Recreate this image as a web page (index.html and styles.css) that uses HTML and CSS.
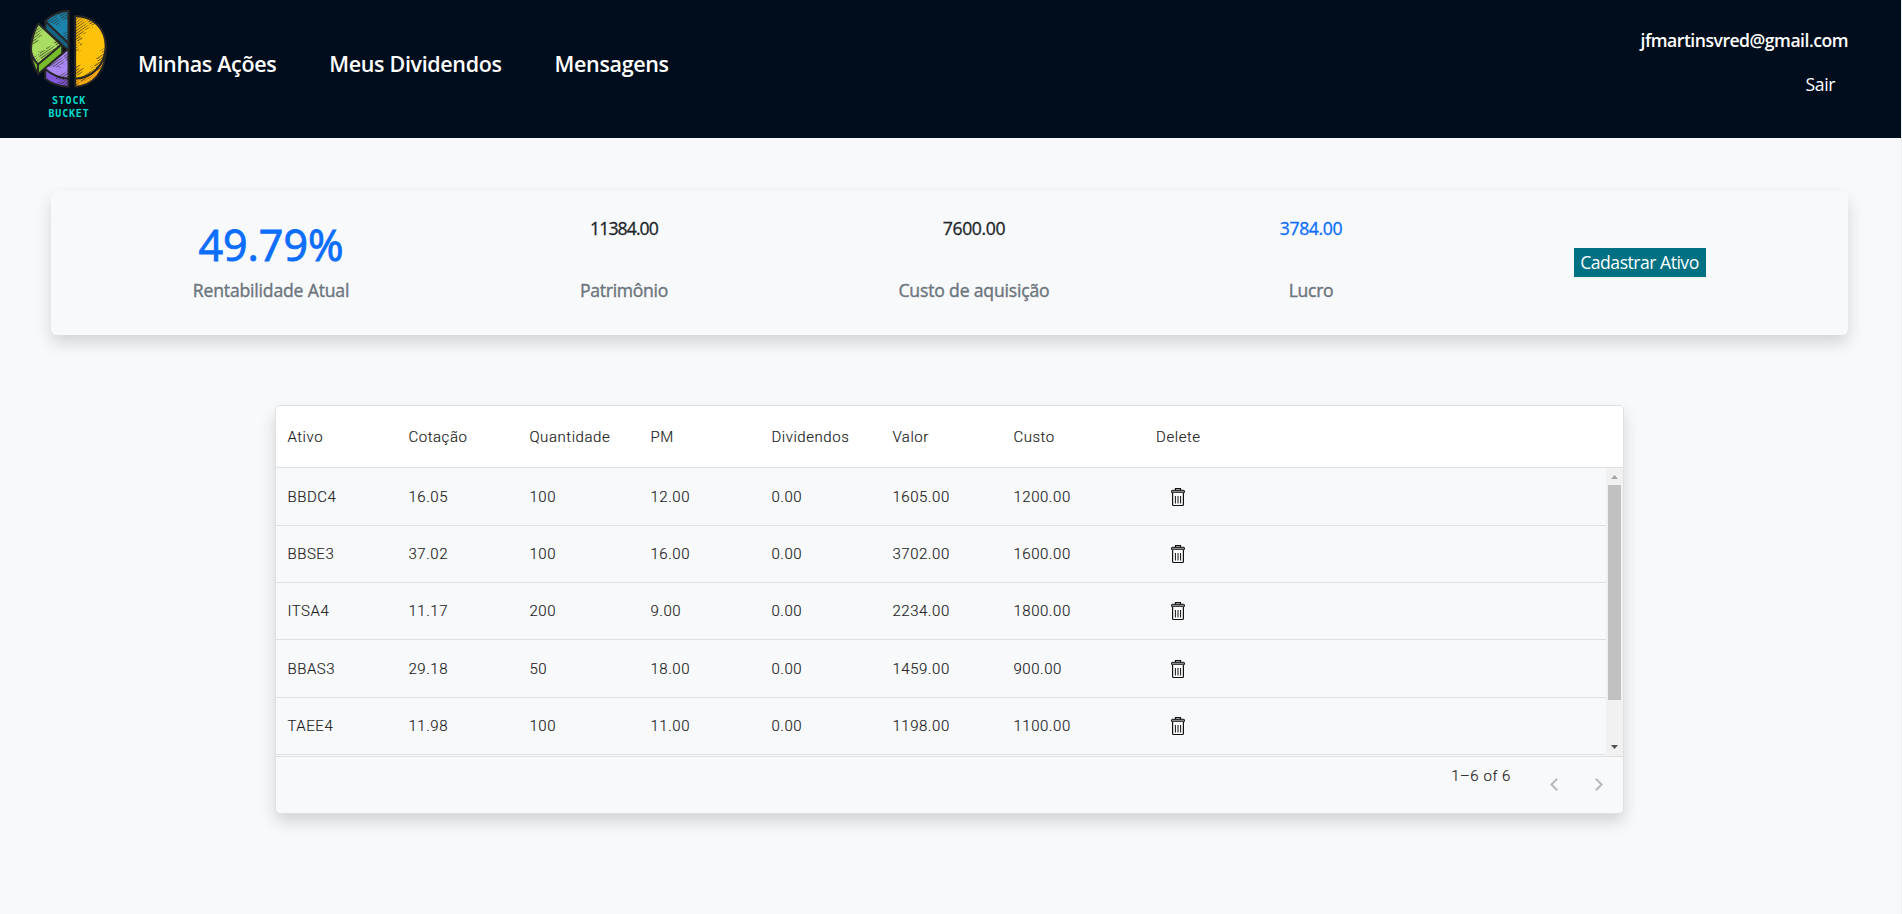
FILE: index.html
```html
<!DOCTYPE html>
<html lang="pt-BR">
<head>
<meta charset="utf-8">
<title>Stock Bucket</title>
<link rel="stylesheet" href="styles.css">
</head>
<body>
<svg class="defs" aria-hidden="true">
  <defs>
    <pattern id="hatch" width="60" height="7" patternUnits="userSpaceOnUse" patternTransform="rotate(-35)">
      <path d="M0 1.5L48 2.6L60 3L48 4L0 4.5Z" fill="#242019"/>
    </pattern>
    <symbol id="trash" viewBox="0 0 14 18">
      <path d="M4.5 2V.7h5V2" fill="none" stroke="#111" stroke-width="1.2"/>
      <rect x=".6" y="2.3" width="12.8" height="2.6" rx=".6" fill="#8b8b8b" stroke="#111"/>
      <path d="M1.6 5v11.4q0 1.1 1.1 1.1h8.6q1.1 0 1.1-1.1V5" fill="#fff" stroke="#111" stroke-width="1.2"/>
      <path d="M4.4 8v7.5M7 8v7.5M9.6 8v7.5" stroke="#111"/>
    </symbol>
  </defs>
</svg>
<header class="topbar">
  <div class="brand">
    <svg class="pie" viewBox="88 26 236 238">
      <g stroke="#272626" stroke-width="6" stroke-linejoin="round">
        <path d="M226 47C286 50 318 92 318 148C318 215 280 257 226 260Z" fill="#f5a80f"/>
        <path d="M226 47C284 48 318 88 318 138C316 195 278 234 226 236Z" fill="#ffc20a"/>
        <path d="M206 31V150L136 95V62Q165 34 206 31Z" fill="#146382"/>
        <path d="M206 31V130L136 62Q165 34 206 31Z" fill="#1c85ae"/>
        <path d="M206 146V260Q163 258 136 236V202Z" fill="#8258dc"/>
        <path d="M206 146V236Q165 233 136 207V202Z" fill="#a987f3"/>
        <path d="M115 70L187 134V160L115 222Q92 187 93 145Q96 102 115 70Z" fill="#77bd2b"/>
        <path d="M115 70L184 134L114 193Q92 170 93 145Q96 102 115 70Z" fill="#a9de62"/>
        <path d="M114 193V222" fill="none"/>
      </g>
      <g class="hatching" fill="url(#hatch)">
        <path d="M226 47L256 52L290 72L272 76L280 82L248 92L262 98L238 106L252 116L234 124L250 132L232 142L244 150L226 158Z"/>
        <path d="M318 140L316 174L300 208L272 232L226 258V240L262 232L250 224L280 210L270 200L296 184L288 174L308 160L302 150Z"/>
        <path d="M226 196L244 194L236 206L256 204L242 222L226 230Z"/>
        <path d="M206 34V60L186 58L196 68L176 66L184 76L164 74L140 62L170 42Z"/>
        <path d="M206 92V128L186 110L196 104L184 98Z"/>
        <path d="M206 158V182L190 184L198 192L176 194L186 204L160 200L140 200Z"/>
        <path d="M206 212V256L170 250L190 240L166 236L186 222Z"/>
        <path d="M115 74L134 90L118 100L128 106L108 116L120 124L98 132L96 120Z"/>
        <path d="M184 134L114 192L98 168L122 160L114 154L142 148L134 142L164 134L154 126L168 122Z"/>
      </g>
    </svg>
    <div class="brand-name">STOCK<br>BUCKET</div>
  </div>
  <nav class="nav">
    <a>Minhas Ações</a>
    <a>Meus Dividendos</a>
    <a>Mensagens</a>
  </nav>
  <div class="user">
    <span class="email">jfmartinsvred@gmail.com</span>
    <a class="logout">Sair</a>
  </div>
</header>
<main class="page">
  <section class="summary">
    <div class="stat"><span class="big">49.79%</span><span class="label wide">Rentabilidade Atual</span></div>
    <div class="stat"><span class="value tight">11384.00</span><span class="label">Patrimônio</span></div>
    <div class="stat"><span class="value">7600.00</span><span class="label wide">Custo de aquisição</span></div>
    <div class="stat"><span class="value blue">3784.00</span><span class="label">Lucro</span></div>
    <a class="add">Cadastrar Ativo</a>
  </section>
  <section class="grid">
    <div class="row head"><span>Ativo</span><span>Cotação</span><span>Quantidade</span><span>PM</span><span>Dividendos</span><span>Valor</span><span>Custo</span><span class="del">Delete</span></div>
    <div class="body">
      <div class="rows">
        <div class="row tall"><span>BBDC4</span><span>16.05</span><span>100</span><span>12.00</span><span>0.00</span><span>1605.00</span><span>1200.00</span><span class="del"><svg><use href="#trash"/></svg></span></div>
        <div class="row"><span>BBSE3</span><span>37.02</span><span>100</span><span>16.00</span><span>0.00</span><span>3702.00</span><span>1600.00</span><span class="del"><svg><use href="#trash"/></svg></span></div>
        <div class="row"><span>ITSA4</span><span>11.17</span><span>200</span><span>9.00</span><span>0.00</span><span>2234.00</span><span>1800.00</span><span class="del"><svg><use href="#trash"/></svg></span></div>
        <div class="row tall"><span>BBAS3</span><span>29.18</span><span>50</span><span>18.00</span><span>0.00</span><span>1459.00</span><span>900.00</span><span class="del"><svg><use href="#trash"/></svg></span></div>
        <div class="row"><span>TAEE4</span><span>11.98</span><span>100</span><span>11.00</span><span>0.00</span><span>1198.00</span><span>1100.00</span><span class="del"><svg><use href="#trash"/></svg></span></div>
      </div>
      <div class="scroll">
        <svg class="arrow" viewBox="0 0 7 4"><path d="M0 4L3.5 0L7 4Z" fill="#a3a3a3"/></svg>
        <div class="thumb"></div>
        <svg class="arrow" viewBox="0 0 7 4"><path d="M0 0L3.5 4L7 0Z" fill="#505050"/></svg>
      </div>
    </div>
    <div class="foot">
      <span class="count">1–6 of 6</span>
      <svg class="chev" viewBox="0 0 8 13"><path d="M7.2 .8L1.4 6.5L7.2 12.2" /></svg>
      <svg class="chev" viewBox="0 0 8 13"><path d="M.8 .8L6.6 6.5L.8 12.2" /></svg>
    </div>
  </section>
</main>
</body>
</html>
```

FILE: styles.css
```css
* { box-sizing: border-box; }
body {
  margin: 0;
  height: 914px;
  overflow: hidden;
  background: #f8f9fb;
  border-right: 1px solid #eef0f2;
  font-family: "Open Sans", "Noto Sans", sans-serif;
  color: #212529;
}
.defs { position: absolute; width: 0; height: 0; }
.topbar {
  display: flex;
  height: 138px;
  background: #000d1c;
  color: #fff;
}
.brand { width: 138px; padding-top: 9px; text-align: center; }
.pie { display: block; width: 79px; height: 79px; margin-left: 29px; }
.hatching { opacity: .75; }
.brand-name {
  margin-top: 6px;
  font: bold 10px/13px "DejaVu Sans Mono", monospace;
  letter-spacing: .8px;
  color: #06dccb;
}
.nav { display: flex; padding-top: 48px; gap: 53px; font-size: 21.5px; line-height: 32px; font-weight: 600; letter-spacing: -.35px; }
.user {
  margin-left: auto;
  padding: 28px 53px 0 0;
  display: flex;
  flex-direction: column;
  align-items: flex-end;
  gap: 20px;
  font-size: 17.6px;
  line-height: 24px;
}
.email { font-weight: 600; letter-spacing: -.5px; }
.logout { margin-right: 13px; letter-spacing: -.4px; }
.page { padding: 53px 0 0 51px; }
.summary {
  display: grid;
  grid-template-columns: 440px 266px 434px 240px 417px;
  width: 1797px;
  height: 144px;
  border-radius: 6px;
  background: #f8f9fb;
  box-shadow: 0 8px 16px rgba(0,0,0,.15);
}
.stat { display: flex; flex-direction: column; align-items: center; justify-content: space-between; padding: 25px 0 33px; font-size: 17.6px; line-height: 24px; -webkit-text-stroke: .3px currentColor; }
.big { font-size: 43px; line-height: 58px; color: #0d6efd; -webkit-text-stroke-width: .9px; }
.value { letter-spacing: -.35px; }
.tight { letter-spacing: -.9px; }
.label { color: #6c757d; letter-spacing: -.3px; -webkit-text-stroke-width: .4px; }
.wide { letter-spacing: -.18px; }
.blue { color: #0d6efd; }
.add { align-self: center; justify-self: center; margin-bottom: 1px; background: #007083; color: #fff; font-size: 17.6px; line-height: 29px; width: 132px; text-align: center; letter-spacing: -.5px; }
.grid {
  width: 1349px;
  height: 409px;
  margin: 70px 0 0 224px;
  border: 1px solid #dee0e2;
  border-radius: 5px;
  background: #f8f9fb;
  box-shadow: 0 8px 16px rgba(0,0,0,.15);
  overflow: hidden;
  font-family: Roboto, sans-serif;
  font-size: 15px;
  font-weight: 300;
  letter-spacing: .55px;
  color: #1c1c1c;
  -webkit-text-stroke: .15px currentColor;
}
.row {
  display: grid;
  grid-template-columns: repeat(7, 121px) 88px;
  padding-left: 11.4px;
  height: 57px;
  align-items: center;
  border-bottom: 1px solid #dee0e2;
}
.tall { height: 58px; }
.head { height: 62px; background: #fff; }
.del { text-align: center; }
.del svg { display: block; width: 14px; height: 18px; margin: 0 auto; }
.body { display: flex; height: 288px; }
.rows { flex: 1; }
.scroll { width: 17px; background: #f1f1f1; display: flex; flex-direction: column; align-items: center; padding: 7px 0; }
.arrow { width: 7px; height: 4px; }
.thumb { width: 13px; height: 215px; margin: 6px 0 auto; background: #c1c1c1; }
.foot { display: flex; height: 57px; border-top: 1px solid #dee0e2; padding: 7px 20px 0 0; justify-content: flex-end; }
.count { line-height: 24px; margin-right: 2px; }
.chev { width: 8px; height: 13px; margin: 14px 0 0 37px; fill: none; stroke: #b7b9bb; stroke-width: 2; }
```
